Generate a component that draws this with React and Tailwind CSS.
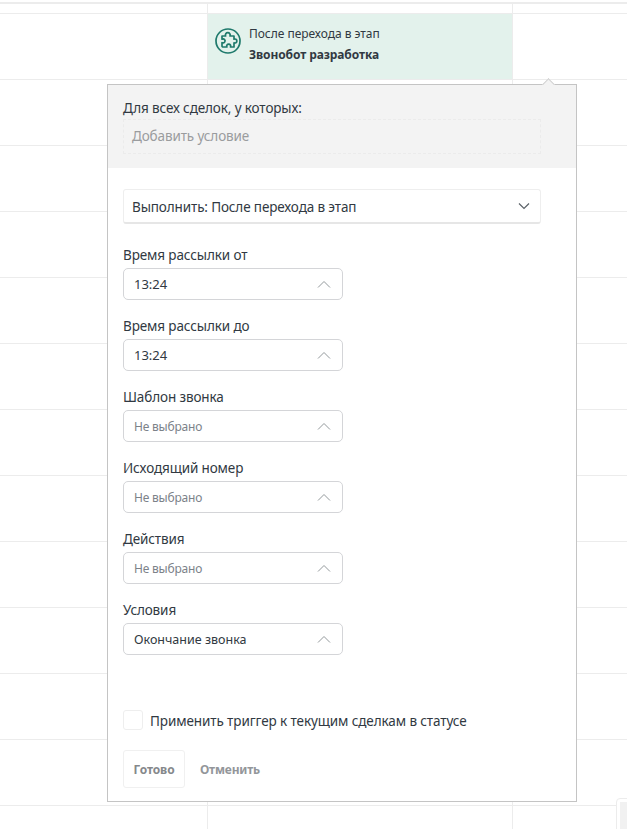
import React from "react";

const rows = Array.from({ length: 12 });

const Field = ({ label, value, muted, small }) => {
  return (
    <div className="flex flex-col">
      <label className="h-[26px] text-[13.5px] leading-[26px] tracking-[-0.12px] text-[#313942]">{label}</label>
      <div className="flex h-[32px] w-[220px] items-center justify-between rounded-[5px] border border-[#d4d5d8] bg-white pl-[10px] pr-[11px]">
        <span
          className={
            muted
              ? "pt-[1px] text-[12px] tracking-[-0.2px] text-[#7c8289]"
              : small
                ? "pt-[2px] text-[12.5px] text-[#313942]"
                : "pt-[1px] text-[13px] text-[#313942]"
          }
        >
          {value}
        </span>
        <svg width="14" height="8" viewBox="0 0 14 8" fill="none" stroke="#92989b" strokeWidth="1">
          <path d="M1 7.5 7 1.5l6 6" />
        </svg>
      </div>
    </div>
  );
};

const PuzzleIcon = () => {
  return (
    <svg className="mt-[14px] self-start" width="26" height="26" viewBox="0 0 26 26" fill="none" stroke="#1f7a6c" strokeWidth="1.7">
      <circle cx="13" cy="13" r="12" />
      <path
        strokeLinejoin="round"
        d="M7 8h3.6a2.4 2.4 0 1 1 4.4 0h4v3.2a2 2 0 1 1 0 3.6V19h-3.5a2 2 0 1 0-3.6 0H8c-.6 0-1-.4-1-1v-3.4a2 2 0 1 0 0-3.4z"
      />
    </svg>
  );
};

const App = () => {
  return (
    <div className="relative h-[829px] w-[627px] overflow-hidden bg-white font-['Noto_Sans',sans-serif]">
      {/* table behind the popup */}
      <div className="mt-[2px] grid h-[12px] grid-cols-[208px_305px_1fr] border-t-2 border-b border-[#ececec]">
        <div className="border-r border-[#ececec]" />
        <div className="border-r border-[#ececec]" />
        <div />
      </div>
      <div className="grid h-[66px] grid-cols-[208px_305px_1fr] border-b border-[#ececec]">
        <div className="border-r border-[#ececec]" />
        <div className="flex items-center gap-[8px] border-r border-[#ececec] bg-[#e3f2ec] pl-[7px]">
          <PuzzleIcon />
          <div className="flex flex-col gap-[2px] pb-[5px]">
            <span className="text-[12px] leading-[19px] tracking-[-0.03px] text-[#313942]">После перехода в этап</span>
            <span className="text-[12px] font-bold leading-[19px] tracking-[-0.1px] text-[#313942]">Звонобот разработка</span>
          </div>
        </div>
        <div />
      </div>
      {rows.map((_, i) => (
        <div key={i} className="grid h-[66px] grid-cols-[208px_305px_1fr] border-b border-[#ececec]">
          <div className="border-r border-[#ececec]" />
          <div className="border-r border-[#ececec]" />
          <div />
        </div>
      ))}

      {/* scroll control in the corner */}
      <div className="absolute left-[616px] top-[798px] h-[40px] w-[20px] rounded-[4px] border border-[#ececec] bg-white p-[3px]">
        <div className="h-full w-full bg-[#f1f1f1]" />
      </div>

      {/* popup */}
      <div className="absolute left-[107px] top-[84px] flex h-[718px] w-[470px] flex-col border border-[#c4c4c4] bg-white">
        <div className="absolute -top-[5px] left-[436px] h-[9px] w-[9px] rotate-45 border-l border-t border-[#d0d0d0] bg-[#f3f3f3]" />
        <div className="relative h-[83px] bg-[#f3f3f3] px-[15px] pt-[13px]">
          <div className="text-[13.5px] leading-[20px] tracking-[-0.12px] text-[#313942]">Для всех сделок, у которых:</div>
          <div className="mt-[1px] flex h-[35px] w-[418px] items-center border border-dashed border-[#ebebeb] pb-[1px] pl-[8px] text-[13.5px] tracking-[-0.12px] text-[#9a9c9e]">
            Добавить условие
          </div>
        </div>

        <div className="mx-[15px] mt-[21px] flex h-[35px] w-[418px] items-center justify-between rounded-[3px] border border-[#eeeeee] border-b-2 border-b-[#e6e6e6] bg-white pl-[8px] pr-[10px]">
          <span className="pt-[3px] text-[13.5px] tracking-[-0.12px] text-[#313942]">Выполнить: После перехода в этап</span>
          <svg width="12" height="8" viewBox="0 0 12 8" fill="none" stroke="#5b6268" strokeWidth="1.2">
            <path d="M1 1.5 6 6.5l5-5" />
          </svg>
        </div>

        <div className="mx-[15px] mt-[18px] flex flex-col gap-[13px]">
          <Field label="Время рассылки от" value="13:24" />
          <Field label="Время рассылки до" value="13:24" />
          <Field label="Шаблон звонка" value="Не выбрано" muted />
          <Field label="Исходящий номер" value="Не выбрано" muted />
          <Field label="Действия" value="Не выбрано" muted />
          <Field label="Условия" value="Окончание звонка" small />
        </div>

        <div className="mx-[15px] mt-[55px] flex h-[20px] items-center gap-[7px]">
          <div className="h-[20px] w-[20px] rounded-[3px] border border-[#eeeeee] bg-white" />
          <span className="pt-[3px] text-[13.5px] tracking-[-0.1px] text-[#313942]">Применить триггер к текущим сделкам в статусе</span>
        </div>

        <div className="mx-[15px] mt-[20px] flex items-center gap-[15px]">
          <button className="h-[38px] w-[62px] rounded-[3px] border border-[#f0f0f0] bg-white pt-[2px] text-[12px] font-bold tracking-[-0.1px] text-[#85888b]">
            Готово
          </button>
          <button className="pt-[1px] text-[12px] font-bold tracking-[-0.2px] text-[#93969a]">Отменить</button>
        </div>
      </div>
    </div>
  );
};

export default App;
